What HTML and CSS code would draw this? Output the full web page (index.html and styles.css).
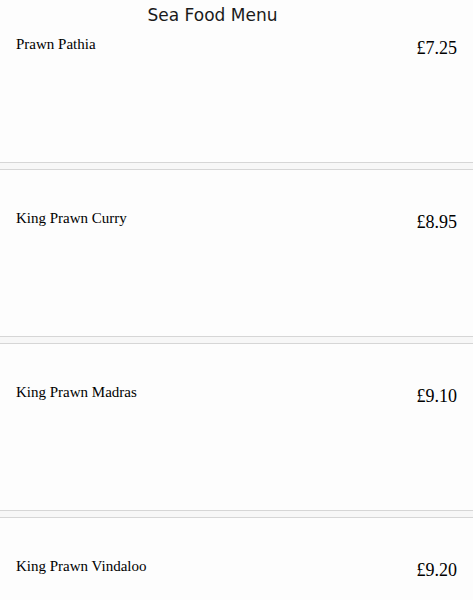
FILE: index.html
```html
<!DOCTYPE html>
<html lang="en">
  <head>
    <meta charset="UTF-8" />
    <meta name="viewport" content="width=device-width, initial-scale=1.0" />
    <title>Sea Food Menu</title>
    <link rel="stylesheet" href="styles.css">
  </head>
  <body>
    <div class="menu-title">Sea Food Menu</div>

    <div class="menu-item">
      <span class="item-name">Prawn Pathia</span>
      <span class="item-price">£7.25</span>
    </div>
    <div class="divider"></div>

    <div class="menu-item">
      <span class="item-name">King Prawn Curry</span>
      <span class="item-price">£8.95</span>
    </div>
    <div class="divider"></div>

    <div class="menu-item">
      <span class="item-name">King Prawn Madras</span>
      <span class="item-price">£9.10</span>
    </div>
    <div class="divider"></div>

    <div class="menu-item">
      <span class="item-name">King Prawn Vindaloo</span>
      <span class="item-price">£9.20</span>
    </div>
  </body>
</html>
```

FILE: styles.css
```css
html,
body {
  margin: 0;
  background-color: #fdfdfd;
  color: #000;
  font-family: "Liberation Serif", "Times New Roman", serif;
}

.menu-title {
  height: 25px;
  box-sizing: border-box;
  padding-top: 5px;
  padding-right: 48px;
  text-align: center;
  font-family: "DejaVu Sans", Verdana, sans-serif;
  font-size: 17px;
  line-height: 20px;
  color: #1a1a1a;
}

.menu-item {
  height: 166px;
  box-sizing: border-box;
  padding: 40px 16px 0 16px;
  display: flex;
  justify-content: space-between;
  align-items: flex-start;
}
.menu-title + .menu-item {
  height: 137px;
  padding-top: 11px;
}
.item-name {
  font-size: 15px;
}
.item-price {
  font-size: 18px;
  margin-top: 2px;
}

/* 分隔线 */
.divider {
  height: 6px;
  border-top: 1px solid #d6d6d6;
  border-bottom: 1px solid #d6d6d6;
  background-color: #f7f7f7;
}
```
